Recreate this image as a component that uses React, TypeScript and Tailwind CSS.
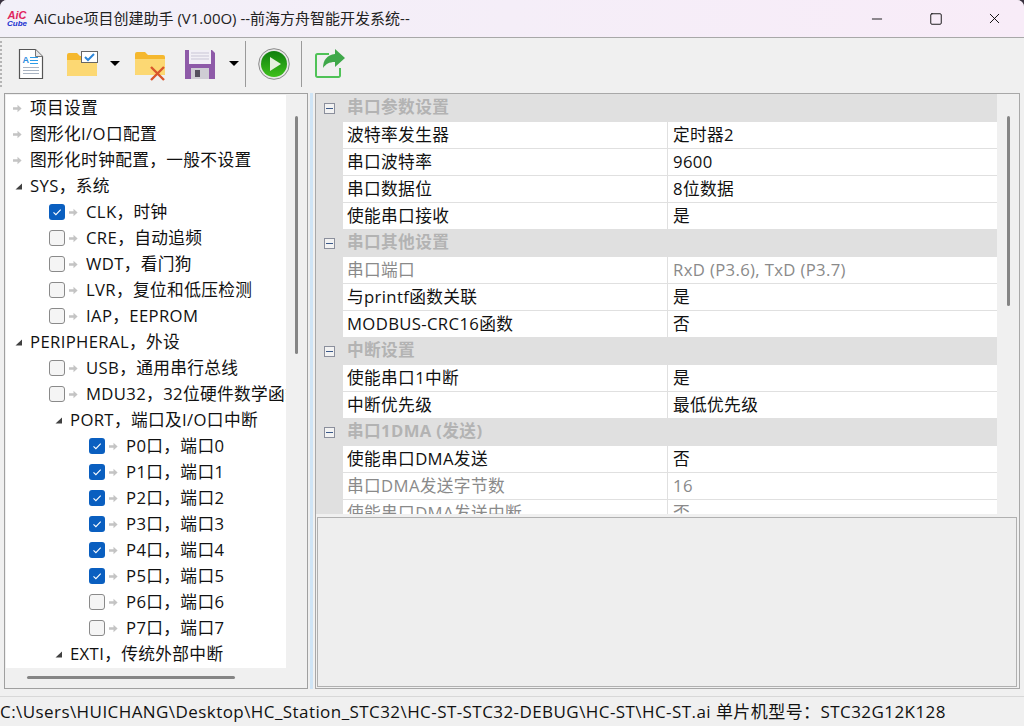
import { Minus, Square, X } from 'lucide-react';

const FONT = "font-['Open_Sans','Noto_Sans_CJK_SC',sans-serif]";

interface TreeItem { label: string; level: 0 | 1 | 2; kind: 'leaf' | 'open' | 'check'; checked?: boolean; sub?: boolean }

const treeItems: TreeItem[] = [
  { label: '项目设置', level: 0, kind: 'leaf' },
  { label: '图形化I/O口配置', level: 0, kind: 'leaf' },
  { label: '图形化时钟配置，一般不设置', level: 0, kind: 'leaf' },
  { label: 'SYS，系统', level: 0, kind: 'open' },
  { label: 'CLK，时钟', level: 1, kind: 'check', checked: true },
  { label: 'CRE，自动追频', level: 1, kind: 'check' },
  { label: 'WDT，看门狗', level: 1, kind: 'check' },
  { label: 'LVR，复位和低压检测', level: 1, kind: 'check' },
  { label: 'IAP，EEPROM', level: 1, kind: 'check' },
  { label: 'PERIPHERAL，外设', level: 0, kind: 'open' },
  { label: 'USB，通用串行总线', level: 1, kind: 'check' },
  { label: 'MDU32，32位硬件数学函数', level: 1, kind: 'check' },
  { label: 'PORT，端口及I/O口中断', level: 1, kind: 'open', sub: true },
  { label: 'P0口，端口0', level: 2, kind: 'check', checked: true },
  { label: 'P1口，端口1', level: 2, kind: 'check', checked: true },
  { label: 'P2口，端口2', level: 2, kind: 'check', checked: true },
  { label: 'P3口，端口3', level: 2, kind: 'check', checked: true },
  { label: 'P4口，端口4', level: 2, kind: 'check', checked: true },
  { label: 'P5口，端口5', level: 2, kind: 'check', checked: true },
  { label: 'P6口，端口6', level: 2, kind: 'check' },
  { label: 'P7口，端口7', level: 2, kind: 'check' },
  { label: 'EXTI，传统外部中断', level: 1, kind: 'open', sub: true },
];

type GridRow = { group: string } | { name: string; value: string; dim?: boolean };

const gridRows: GridRow[] = [
  { group: '串口参数设置' },
  { name: '波特率发生器', value: '定时器2' },
  { name: '串口波特率', value: '9600' },
  { name: '串口数据位', value: '8位数据' },
  { name: '使能串口接收', value: '是' },
  { group: '串口其他设置' },
  { name: '串口端口', value: 'RxD (P3.6), TxD (P3.7)', dim: true },
  { name: '与printf函数关联', value: '是' },
  { name: 'MODBUS-CRC16函数', value: '否' },
  { group: '中断设置' },
  { name: '使能串口1中断', value: '是' },
  { name: '中断优先级', value: '最低优先级' },
  { group: '串口1DMA (发送)' },
  { name: '使能串口DMA发送', value: '否' },
  { name: '串口DMA发送字节数', value: '16', dim: true },
  { name: '使能串口DMA发送中断', value: '否', dim: true },
];

function LeafArrow() {
  return (
    <svg width="9" height="9" viewBox="0 0 9 9" className="shrink-0">
      <path d="M0 3.2h4.5V0.8L8.6 4.5 4.5 8.2V5.800H0z" fill="#c4c4c4" />
    </svg>
  );
}

function OpenTriangle() {
  return (
    <svg width="7" height="7" viewBox="0 0 7 7" className="shrink-0">
      <path d="M7 0.5V6.500H0.500z" fill="#404040" />
    </svg>
  );
}

function CheckBox({ checked }: { checked?: boolean }) {
  if (checked) {
    return (
      <span className="w-4 h-4 rounded-[3px] bg-[#0a5fc0] flex items-center justify-center shrink-0">
        <svg width="10" height="10" viewBox="0 0 10 10">
          <path d="M1.5 5.3l2.400 2.400 4.800-5" fill="none" stroke="#fff" strokeWidth="1.1" />
        </svg>
      </span>
    );
  }
  return <span className="w-4 h-4 rounded-[3px] bg-[#f5f5f5] border border-[#8a8a8a] shrink-0" />;
}

function TreeRow({ item }: { item: TreeItem }) {
  if (item.kind === 'check') {
    return (
      <div className={`flex items-center h-[26px] ${item.level === 2 ? 'pl-[83px]' : 'pl-[43px]'}`}>
        <CheckBox checked={item.checked} />
        <span className="ml-1 w-[9px]"><LeafArrow /></span>
        <span className="ml-2 whitespace-nowrap">{item.label}</span>
      </div>
    );
  }
  if (item.kind === 'open') {
    return (
      <div className={`flex items-center h-[26px] ${item.sub ? 'pl-[49px]' : 'pl-[9px]'}`}>
        <OpenTriangle />
        <span className="ml-2 whitespace-nowrap">{item.label}</span>
      </div>
    );
  }
  return (
    <div className="flex items-center h-[26px] pl-[7px]">
      <LeafArrow />
      <span className="ml-2 whitespace-nowrap">{item.label}</span>
    </div>
  );
}

function GridLine({ row, first }: { row: GridRow; first: boolean }) {
  if ('group' in row) {
    return (
      <div className={`flex items-center bg-[#e0e0e0] ${first ? 'h-[28px]' : 'h-[27px]'}`}>
        <span className="w-[27px] flex justify-center">
          <span className="w-[11px] h-[11px] border border-[#8b8f9c] bg-[#f2f2f2] flex items-center justify-center">
            <span className="w-[7px] h-px bg-[#3c5a8a]" />
          </span>
        </span>
        <span className="pl-1 pb-[2px] font-bold text-[#b3b3b3]">{row.group}</span>
      </div>
    );
  }
  const color = row.dim ? 'text-[#8a8a8a]' : 'text-[#111]';
  return (
    <div className="flex h-[27px] bg-[#e0e0e0]">
      <div className="w-[27px] shrink-0" />
      <div className={`w-[324px] shrink-0 bg-white border-b border-[#e0e0e0] pl-1 flex items-center ${color}`}>{row.name}</div>
      <div className={`flex-1 bg-white border-b border-l border-[#e0e0e0] pl-[5px] flex items-center ${color}`}>{row.value}</div>
    </div>
  );
}

function DropArrow() {
  return <span className="w-0 h-0 border-x-[5px] border-x-transparent border-t-[5px] border-t-black" />;
}

function DocIcon() {
  return (
    <svg width="26" height="32" viewBox="0 0 26 32">
      <path d="M1.500 1.500h16l7 7v22h-23z" fill="#fff" stroke="#555" strokeWidth="1.2" />
      <path d="M17.500 1.500v7h7" fill="#e6e6e6" stroke="#777" />
      <text x="4.500" y="15" fontSize="9" fontWeight="700" fill="#2b8be0" fontFamily="Liberation Sans">A</text>
      <path d="M12 9.500h8M12 12.500h8M12 15.500h8" stroke="#2b9be8" />
      <path d="M5 19.500h16M5 22.500h16M5 25.500h16" stroke="#a9b4c2" />
    </svg>
  );
}

function FolderBase() {
  return (
    <>
      <path d="M0 3a2 2 0 012-2h8l3 3h15a2 2 0 012 2v17a1 1 0 01-1 1H1a1 1 0 01-1-1z" fill="#f5b82e" />
      <path d="M0 8h30v15a1 1 0 01-1 1H1a1 1 0 01-1-1z" fill="#fcd873" />
    </>
  );
}

function FolderCheckIcon() {
  return (
    <svg width="31" height="25" viewBox="0 0 31 25">
      <g transform="translate(0 1)"><FolderBase /></g>
      <rect x="14.500" y="0.500" width="16" height="11" fill="#fff" stroke="#666" />
      <path d="M18 6l3 3 6-6" fill="none" stroke="#2d86d9" strokeWidth="2" />
    </svg>
  );
}

function FolderCrossIcon() {
  return (
    <svg width="32" height="30" viewBox="0 0 32 30">
      <FolderBase />
      <path d="M16 16l13 13M29 16L16 29" stroke="#d9562b" strokeWidth="2.400" />
    </svg>
  );
}

function DiskIcon() {
  return (
    <svg width="30" height="30" viewBox="0 0 30 30">
      <path d="M0 1h27l3 3v26H0z" fill="#8e5aa8" />
      <rect x="4" y="1" width="22" height="14" fill="#f2f0f6" />
      <path d="M6 4h18M6 7h18M6 10h18" stroke="#c9c5d6" />
      <rect x="6" y="19" width="18" height="11" fill="#cfcdd4" />
      <rect x="10" y="21" width="5" height="7" fill="#55505e" />
    </svg>
  );
}

function PlayIcon() {
  return (
    <svg width="32" height="32" viewBox="0 0 32 32">
      <defs>
        <linearGradient id="playFill" x1="0" y1="0" x2="0" y2="1">
          <stop offset="0" stopColor="#0f7f0f" />
          <stop offset="1" stopColor="#3fc01c" />
        </linearGradient>
      </defs>
      <circle cx="16" cy="16" r="15.300" fill="#e8e8e8" stroke="#8a8a8a" />
      <circle cx="16" cy="16" r="13" fill="url(#playFill)" />
      <path d="M12 9l11 7-11 7z" fill="#e6f0e0" />
    </svg>
  );
}

function ShareIcon() {
  return (
    <svg width="30" height="29" viewBox="0 0 30 29">
      <path d="M14 5H2.500a1.500 1.500 0 00-1.500 1.500v20A1.500 1.500 0 002.500 28h21a1.500 1.500 0 001.500-1.500V19" fill="none" stroke="#4fc257" strokeWidth="2" />
      <path d="M20 0l10 9-10 9v-5c-6 0-9 2-12 6 0-8 4-13 12-14z" fill="#3fa84a" />
    </svg>
  );
}

function ToolSep() {
  return <span className="w-px h-[46px] bg-[#9a9a9a]" />;
}

export default function App() {
  return (
    <div className={`w-[1024px] h-[726px] overflow-hidden bg-[#3a3340] text-[16.7px] tracking-[0.35px] leading-none text-[#111] ${FONT}`}>
      <div className="h-full flex flex-col rounded-t-[7px] overflow-hidden bg-[#f0f0f0]">
        {/* title bar */}
        <div className="h-[38px] shrink-0 flex items-center bg-gradient-to-r from-[#f2f0f8] to-[#f8ecf8] border-b border-[#a8a8a8] tracking-normal">
          <div className="w-[34px] flex flex-col items-center font-['Liberation_Sans',sans-serif] italic font-bold">
            <span className="text-[11px] leading-[10px] text-[#e0245e]">AiC</span>
            <span className="text-[8px] leading-[8px] text-[#2030d0]">Cube</span>
          </div>
          <span className="text-[15px] text-[#222]">AiCube项目创建助手 (V1.00O) --前海方舟智能开发系统--</span>
          <div className="ml-auto flex items-center text-black">
            <span className="w-[59px] flex justify-center"><Minus size={16} strokeWidth={1.300} /></span>
            <span className="w-[59px] flex justify-center"><Square size={14} strokeWidth={1.500} /></span>
            <span className="w-[59px] flex justify-center pr-[1px]"><X size={17} strokeWidth={1.300} /></span>
          </div>
        </div>

        {/* toolbar */}
        <div className="h-[55px] shrink-0 flex items-center pb-[4px]">
          <span className="w-[18px] h-[46px] border-l-2 border-dotted border-[#b5b5b5]" />
          <DocIcon />
          <span className="ml-[23px]"><FolderCheckIcon /></span>
          <span className="ml-[12px] flex"><DropArrow /></span>
          <span className="ml-[15px] mt-[4px]"><FolderCrossIcon /></span>
          <span className="ml-[18px]"><DiskIcon /></span>
          <span className="ml-[14px] flex"><DropArrow /></span>
          <span className="ml-[6px] flex"><ToolSep /></span>
          <span className="ml-[12px]"><PlayIcon /></span>
          <span className="ml-[11px] flex"><ToolSep /></span>
          <span className="ml-[13px]"><ShareIcon /></span>
        </div>

        {/* panes */}
        <div className="flex-1 min-h-0 flex pl-[4px] pr-[4px]">
          {/* tree */}
          <div className="w-[304px] shrink-0 h-[596px] border border-[#a0a0a0] p-px flex flex-col">
            <div className="h-[573px] flex shrink-0">
              <div className="w-[280px] bg-white overflow-hidden">
                {treeItems.map((item) => <TreeRow key={item.label} item={item} />)}
              </div>
              <div className="flex-1 flex justify-center pt-[21px]">
                <span className="w-[3px] h-[238px] bg-[#858585] rounded-full" />
              </div>
            </div>
            <div className="flex-1 pl-[21px] pt-[8px]">
              <div className="w-[208px] h-[3px] bg-[#858585] rounded-full" />
            </div>
          </div>

          {/* splitter */}
          <div className="w-[7px] shrink-0 h-[596px] flex justify-center">
            <span className="w-[3px] bg-[#cfe4f5]" />
          </div>

          {/* right side */}
          <div className="flex-1 h-[596px] border border-[#a8a8a8] flex flex-col">
            <div className="h-[420px] shrink-0 flex overflow-hidden">
              <div className="w-[681px] shrink-0 h-[420px] overflow-hidden">
                {gridRows.map((row, i) => <GridLine key={i} row={row} first={i === 0} />)}
              </div>
              <div className="flex-1 flex justify-center pt-[22px]">
                <span className="w-[3px] h-[190px] bg-[#858585] rounded-full" />
              </div>
            </div>
            <div className="mt-[3px] h-[170px] ml-px mr-[2px] border border-[#b0b0b0] bg-[#eeeeee]" />
          </div>
        </div>

        {/* status bar */}
        <div className="h-[30px] shrink-0 border-t border-[#d8d8d8] flex items-center whitespace-nowrap text-[17px] tracking-[0.43px] text-[#111] overflow-hidden">
          C:\Users\HUICHANG\Desktop\HC_Station_STC32\HC-ST-STC32-DEBUG\HC-ST\HC-ST.ai 单片机型号：STC32G12K128
        </div>
      </div>
    </div>
  );
}
